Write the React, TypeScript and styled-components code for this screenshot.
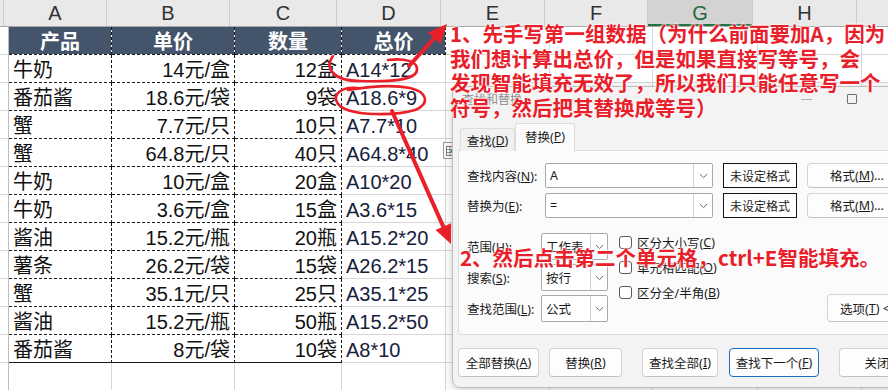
import React from "react";
import styled, { createGlobalStyle, css } from "styled-components";

const CELL_FONT = `"Liberation Sans", "Noto Sans CJK SC", sans-serif`;
const UI_FONT = `"Noto Sans", "Noto Sans CJK SC", sans-serif`;
const NOTE_FONT = `"Noto Sans CJK SC", "Noto Sans", sans-serif`;
const RED = "#e9202a";
const GRID = "#d6d6d6";

const GlobalStyle = createGlobalStyle`
  html, body { margin: 0; padding: 0; background: #fff; overflow: hidden; }
  #root { width: 888px; height: 390px; }
`;

const Stage = styled.div`
  position: relative;
  width: 888px;
  height: 390px;
  overflow: hidden;
  background: #fff;
`;

const Sheet = styled.div`
  display: flex;
  flex-direction: column;
`;

const ColHeaderRow = styled.div`
  display: flex;
  height: 27px;
  box-sizing: border-box;
  background: #e9e9e9;
  border-bottom: 1px solid #a8a8a8;
`;

const ColHead = styled.div<{ $w: number; $selected?: boolean }>`
  flex: 0 0 ${(p) => p.$w}px;
  box-sizing: border-box;
  display: flex;
  align-items: center;
  justify-content: center;
  border-right: 1px solid #cdcdcd;
  font-family: ${CELL_FONT};
  font-size: 20px;
  color: #333;
  ${(p) =>
    p.$selected &&
    css`
      background: #d3d3d3;
      color: #1d6b3b;
      box-shadow: inset 0 -2px 0 #217346;
    `}
`;

const Row = styled.div`
  display: flex;
  height: 28px;
`;

type Kind = "gutter" | "title" | "data" | "dataLast" | "result" | "grid";

const kindStyles: Record<Kind, ReturnType<typeof css>> = {
  gutter: css`
    border-right: 1px solid #bdbdbd;
    border-bottom: 1px solid ${GRID};
  `,
  title: css`
    background: #44546a;
    background-clip: padding-box;
    color: #fff;
    font-weight: 700;
    border-right: 1px dashed #1a1a1a;
    border-bottom: 1px dashed #1a1a1a;
  `,
  data: css`
    border-right: 1px dashed #1a1a1a;
    border-bottom: 1px dashed #1a1a1a;
  `,
  dataLast: css`
    border-right: 1px dashed #1a1a1a;
    border-bottom: 1px solid #1a1a1a;
  `,
  result: css`
    border-right: 1px solid ${GRID};
    border-bottom: 1px solid ${GRID};
    color: #15203a;
  `,
  grid: css`
    border-right: 1px solid ${GRID};
    border-bottom: 1px solid ${GRID};
  `,
};

const Cell = styled.div<{ $w: number; $kind: Kind; $align?: "left" | "right" | "center" }>`
  flex: 0 0 ${(p) => p.$w}px;
  box-sizing: border-box;
  height: 28px;
  display: flex;
  align-items: flex-end;
  justify-content: ${(p) =>
    p.$align === "right" ? "flex-end" : p.$align === "center" ? "center" : "flex-start"};
  padding: 0 4px 1px 4px;
  font-family: ${CELL_FONT};
  font-size: 20px;
  line-height: 22px;
  white-space: nowrap;
  color: #111;
  ${(p) => kindStyles[p.$kind]}
`;

const FlashIcon = styled.div`
  position: absolute;
  left: 443px;
  top: 142px;
  width: 16px;
  height: 17px;
  box-sizing: border-box;
  border: 1px solid #9c9c9c;
  background: #fafafa;
  display: flex;
  align-items: center;
  justify-content: center;
`;

/* ---------- dialog ---------- */

const Dialog = styled.div`
  position: absolute;
  left: 452px;
  top: 86px;
  width: 470px;
  height: 302px;
  box-sizing: border-box;
  background: #f3f3f3;
  border: 1px solid #bcbcbc;
  border-radius: 8px;
  box-shadow: 0 2px 10px rgba(0, 0, 0, 0.2);
  display: flex;
  flex-direction: column;
  font-family: ${UI_FONT};
  font-size: 12px;
  color: #1b1b1b;
`;

const TitleBar = styled.div`
  display: flex;
  align-items: center;
  height: 24px;
`;

const TitleText = styled.div`
  padding-left: 9px;
  flex: 1;
  color: #8c8c8c;
  font-size: 12px;
`;

const CaptionButton = styled.div`
  width: 46px;
  height: 24px;
  display: flex;
  align-items: center;
  justify-content: center;
`;

const MinIcon = styled.div`
  width: 11px;
  height: 1px;
  background: #b0b0b0;
`;

const MaxIcon = styled.div`
  width: 10px;
  height: 10px;
  box-sizing: border-box;
  border: 1px solid #6e6e6e;
  border-radius: 1px;
`;

const TabStrip = styled.div`
  display: flex;
  align-items: flex-end;
  margin: 12px 0 -1px 7px;
  position: relative;
  z-index: 1;
`;

const Tab = styled.div<{ $active?: boolean; $w: number }>`
  width: ${(p) => p.$w}px;
  height: ${(p) => (p.$active ? 28 : 23)}px;
  box-sizing: border-box;
  display: flex;
  align-items: center;
  justify-content: center;
  border: 1px solid #dcdcdc;
  border-bottom: none;
  background: ${(p) => (p.$active ? "#fbfbfb" : "#f1f1f1")};
  border-radius: 3px 3px 0 0;
  font-size: 12.5px;
  padding-bottom: ${(p) => (p.$active ? 2 : 0)}px;
`;

const Panel = styled.div`
  margin-left: 5px;
  height: 185px;
  box-sizing: border-box;
  background: #fbfbfb;
  border: 1px solid #dcdcdc;
  border-radius: 0 4px 4px 4px;
  padding: 12px 0 0 8px;
  display: flex;
  flex-direction: column;
`;

const FieldRow = styled.div<{ $gap?: number }>`
  display: flex;
  align-items: center;
  height: 25px;
  margin-top: ${(p) => p.$gap ?? 0}px;
`;

const Label = styled.div<{ $w: number }>`
  width: ${(p) => p.$w}px;
  flex: 0 0 ${(p) => p.$w}px;
  font-size: 12.5px;
  white-space: nowrap;
`;

const Combo = styled.div<{ $w: number; $h: number }>`
  width: ${(p) => p.$w}px;
  height: ${(p) => p.$h}px;
  box-sizing: border-box;
  display: flex;
  background: #fff;
  border: 1px solid #a9a9a9;
  border-radius: 2px;
`;

const ComboText = styled.div`
  flex: 1;
  display: flex;
  align-items: center;
  padding-left: 4px;
  font-size: 12.5px;
`;

const ComboArrow = styled.div<{ $w: number }>`
  width: ${(p) => p.$w}px;
  border-left: 1px solid #d0d0d0;
  display: flex;
  align-items: center;
  justify-content: center;
`;

const StatusBox = styled.div`
  margin-left: 10px;
  width: 74px;
  height: 25px;
  box-sizing: border-box;
  border: 1.5px solid #141414;
  background: #fff;
  display: flex;
  align-items: center;
  justify-content: center;
  font-size: 12px;
`;

const Button = styled.div<{ $w: number; $ml?: number; $primary?: boolean; $h?: number }>`
  flex: 0 0 ${(p) => p.$w}px;
  margin-left: ${(p) => p.$ml ?? 0}px;
  height: ${(p) => p.$h ?? 29}px;
  box-sizing: border-box;
  display: flex;
  align-items: center;
  justify-content: center;
  background: #fdfdfd;
  border: 1px solid ${(p) => (p.$primary ? "#1a6fc4" : "#d3d3d3")};
  border-bottom-color: ${(p) => (p.$primary ? "#1a6fc4" : "#c2c2c2")};
  border-radius: 4px;
  font-size: 12.5px;
  white-space: nowrap;
`;

const OptionsArea = styled.div`
  display: flex;
  margin-top: 15px;
`;

const SelectCol = styled.div`
  display: flex;
  flex-direction: column;
  gap: 4px;
`;

const SelectRow = styled.div`
  display: flex;
  align-items: center;
  height: 27px;
`;

const CheckCol = styled.div`
  width: 190px;
  margin-left: 11px;
  margin-top: -3px;
  display: flex;
  flex-direction: column;
`;

const CheckRow = styled.div`
  display: flex;
  align-items: center;
  height: 25px;
  font-size: 12.5px;
  white-space: nowrap;
`;

const CheckBox = styled.div`
  width: 13px;
  height: 13px;
  box-sizing: border-box;
  border: 1px solid #5a5a5a;
  border-radius: 3px;
  background: #fff;
  margin-right: 5px;
`;

const OptionsButton = styled(Button)`
  align-self: flex-end;
  justify-content: flex-start;
  padding-left: 12px;
`;

const ButtonRow = styled.div`
  display: flex;
  margin: 13px 0 0 5px;
`;

/* ---------- annotations ---------- */

const Note = styled.div<{ $left: number; $top: number }>`
  position: absolute;
  left: ${(p) => p.$left}px;
  top: ${(p) => p.$top}px;
  font-family: ${NOTE_FONT};
  font-weight: 700;
  font-size: 20.5px;
  line-height: 24.6px;
  color: ${RED};
  white-space: nowrap;
  text-shadow: 0 0 2px #fff, 0 0 2px #fff, 0 0 3px #fff;
`;

const Overlay = styled.svg`
  position: absolute;
  left: 0;
  top: 0;
  pointer-events: none;
`;

/* ---------- data ---------- */

const COLS = [4, 103, 123, 107, 104, 104, 103, 105, 104, 100];
const LETTERS = ["", "A", "B", "C", "D", "E", "F", "G", "H", "I"];

const rows: [string, string, string, string][] = [
  ["牛奶", "14元/盒", "12盒", "A14*12"],
  ["番茄酱", "18.6元/袋", "9袋", "A18.6*9"],
  ["蟹", "7.7元/只", "10只", "A7.7*10"],
  ["蟹", "64.8元/只", "40只", "A64.8*40"],
  ["牛奶", "10元/盒", "20盒", "A10*20"],
  ["牛奶", "3.6元/盒", "15盒", "A3.6*15"],
  ["酱油", "15.2元/瓶", "20瓶", "A15.2*20"],
  ["薯条", "26.2元/袋", "15袋", "A26.2*15"],
  ["蟹", "35.1元/只", "25只", "A35.1*25"],
  ["酱油", "15.2元/瓶", "50瓶", "A15.2*50"],
  ["番茄酱", "8元/袋", "10袋", "A8*10"],
];

const Chevron = () => (
  <svg width="9" height="6" viewBox="0 0 9 6">
    <path d="M0.8 1 L4.5 4.6 L8.2 1" fill="none" stroke="#6a6a6a" strokeWidth="1" />
  </svg>
);

const CloseIcon = () => (
  <svg width="10" height="10" viewBox="0 0 10 10">
    <path d="M0.5 0.5 L9.5 9.5 M9.5 0.5 L0.5 9.5" stroke="#444" strokeWidth="1" />
  </svg>
);

function head(tx: number, ty: number, fx: number, fy: number, len = 19, half = 8.5) {
  const dx = tx - fx;
  const dy = ty - fy;
  const d = Math.hypot(dx, dy);
  const ux = dx / d;
  const uy = dy / d;
  const bx = tx - ux * len;
  const by = ty - uy * len;
  const px = -uy;
  const py = ux;
  return {
    points: `${tx},${ty} ${bx + px * half},${by + py * half} ${bx - px * half},${by - py * half}`,
    bx: tx - ux * (len - 3),
    by: ty - uy * (len - 3),
  };
}

const GridFill = ({ from }: { from: number }) => (
  <>
    {COLS.slice(from).map((w, i) => (
      <Cell key={i} $w={w} $kind="grid" />
    ))}
  </>
);

export default function App() {
  const a1 = head(447, 24, 409, 66);
  const a2 = head(451, 244, 392, 111);
  return (
    <Stage>
      <GlobalStyle />
      <Sheet>
        <ColHeaderRow>
          {COLS.map((w, i) => (
            <ColHead key={i} $w={w} $selected={LETTERS[i] === "G"}>
              {LETTERS[i]}
            </ColHead>
          ))}
        </ColHeaderRow>
        <Row>
          <Cell $w={COLS[0]} $kind="gutter" />
          <Cell $w={COLS[1]} $kind="title" $align="center">产品</Cell>
          <Cell $w={COLS[2]} $kind="title" $align="center">单价</Cell>
          <Cell $w={COLS[3]} $kind="title" $align="center">数量</Cell>
          <Cell $w={COLS[4]} $kind="title" $align="center">总价</Cell>
          <GridFill from={5} />
        </Row>
        {rows.map((r, i) => {
          const k: Kind = i === rows.length - 1 ? "dataLast" : "data";
          return (
            <Row key={i}>
              <Cell $w={COLS[0]} $kind="gutter" />
              <Cell $w={COLS[1]} $kind={k}>{r[0]}</Cell>
              <Cell $w={COLS[2]} $kind={k} $align="right">{r[1]}</Cell>
              <Cell $w={COLS[3]} $kind={k} $align="right">{r[2]}</Cell>
              <Cell $w={COLS[4]} $kind="result">{r[3]}</Cell>
              <GridFill from={5} />
            </Row>
          );
        })}
        <Row>
          <Cell $w={COLS[0]} $kind="gutter" />
          <GridFill from={1} />
        </Row>
      </Sheet>

      <FlashIcon>
        <svg width="10" height="10" viewBox="0 0 10 10">
          <rect x="0.5" y="0.5" width="9" height="9" fill="#fff" stroke="#7a7a7a" />
          <path d="M0.5 3.5 H9.5 M0.5 6.5 H9.5 M4 0.5 V9.5" stroke="#7a7a7a" strokeWidth="0.8" />
          <rect x="4.5" y="4" width="4.5" height="2.2" fill="#3fa35f" />
        </svg>
      </FlashIcon>

      <Dialog>
        <TitleBar>
          <TitleText>查找和替换</TitleText>
          <CaptionButton>
            <MinIcon />
          </CaptionButton>
          <CaptionButton>
            <MaxIcon />
          </CaptionButton>
          <CaptionButton>
            <CloseIcon />
          </CaptionButton>
        </TitleBar>
        <TabStrip>
          <Tab $w={55}>
            查找(<u>D</u>)
          </Tab>
          <Tab $w={60} $active>
            替换(<u>P</u>)
          </Tab>
        </TabStrip>
        <Panel>
          <FieldRow>
            <Label $w={78}>
              查找内容(<u>N</u>):
            </Label>
            <Combo $w={168} $h={25}>
              <ComboText>A</ComboText>
              <ComboArrow $w={18}>
                <Chevron />
              </ComboArrow>
            </Combo>
            <StatusBox>未设定格式</StatusBox>
            <Button $w={100} $ml={10} $h={25}>
              格式(<u>M</u>)...
            </Button>
          </FieldRow>
          <FieldRow $gap={5}>
            <Label $w={78}>
              替换为(<u>E</u>):
            </Label>
            <Combo $w={168} $h={25}>
              <ComboText>=</ComboText>
              <ComboArrow $w={18}>
                <Chevron />
              </ComboArrow>
            </Combo>
            <StatusBox>未设定格式</StatusBox>
            <Button $w={100} $ml={10} $h={25}>
              格式(<u>M</u>)...
            </Button>
          </FieldRow>
          <OptionsArea>
            <SelectCol>
              {[
                ["范围", "H", "工作表"],
                ["搜索", "S", "按行"],
                ["查找范围", "L", "公式"],
              ].map(([l, k, v]) => (
                <SelectRow key={k}>
                  <Label $w={74}>
                    {l}(<u>{k}</u>):
                  </Label>
                  <Combo $w={67} $h={27}>
                    <ComboText>{v}</ComboText>
                    <ComboArrow $w={16}>
                      <Chevron />
                    </ComboArrow>
                  </Combo>
                </SelectRow>
              ))}
            </SelectCol>
            <CheckCol>
              {[
                ["区分大小写", "C"],
                ["单元格匹配", "O"],
                ["区分全/半角", "B"],
              ].map(([l, k]) => (
                <CheckRow key={k}>
                  <CheckBox />
                  {l}(<u>{k}</u>)
                </CheckRow>
              ))}
            </CheckCol>
            <OptionsButton $w={92} $ml={18} $h={28}>
              选项(<u>T</u>) &lt;&lt;
            </OptionsButton>
          </OptionsArea>
        </Panel>
        <ButtonRow>
          <Button $w={81}>
            全部替换(<u>A</u>)
          </Button>
          <Button $w={73} $ml={10}>
            替换(<u>R</u>)
          </Button>
          <Button $w={76} $ml={20}>
            查找全部(<u>I</u>)
          </Button>
          <Button $w={90} $ml={11} $primary>
            查找下一个(<u>F</u>)
          </Button>
          <Button $w={76} $ml={20}>
            关闭
          </Button>
        </ButtonRow>
      </Dialog>

      <Overlay width={888} height={390} viewBox="0 0 888 390">
        <g fill="none" stroke={RED} strokeWidth={2.6} strokeLinecap="round" strokeLinejoin="round">
          <path d="M333 56 C324 68, 333 81, 360 81 C392 82, 416 80, 417 70 C418 61, 404 58, 388 60" />
          <path d="M358 88 C339 86, 330 97, 340 106 C352 116, 395 116, 415 110 C430 104, 428 92, 410 88 C395 85, 372 86, 348 90" />
        </g>
        <g stroke={RED} strokeWidth={4} strokeLinecap="round">
          <line x1={409} y1={66} x2={a1.bx} y2={a1.by} />
          <line x1={392} y1={111} x2={a2.bx} y2={a2.by} />
        </g>
        <polygon points={a1.points} fill={RED} />
        <polygon points={a2.points} fill={RED} />
      </Overlay>

      <Note $left={450} $top={21}>
        1、先手写第一组数据（为什么前面要加A，因为
        <br />
        我们想计算出总价，但是如果直接写等号，会
        <br />
        发现智能填充无效了，所以我们只能任意写一个
        <br />
        符号，然后把其替换成等号）
      </Note>
      <Note $left={460} $top={245}>
        2、然后点击第二个单元格，ctrl+E智能填充。
      </Note>
    </Stage>
  );
}
